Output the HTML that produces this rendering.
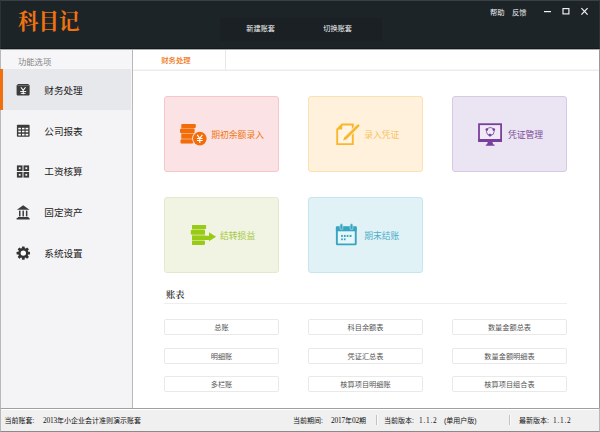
<!DOCTYPE html>
<html lang="zh-CN">
<head>
<meta charset="utf-8">
<title>科目记</title>
<style>
*{box-sizing:border-box;margin:0;padding:0}
html,body{width:600px;height:432px;overflow:hidden;background:#fff}
body{font-family:"Liberation Sans","Noto Sans CJK SC",sans-serif;position:relative;color:#333}
.abs{position:absolute}
svg{position:absolute;overflow:visible}
#hdr{left:0;top:0;width:600px;height:49px;background:#1d2428;border-top:1px solid #3a4044;border-bottom:1px solid #14191c;border-left:1px solid #2c3236;border-right:1px solid #2c3236}
#logo{left:17.8px;top:6.8px;font-size:22px;line-height:30px;color:#f0730f;font-family:"Liberation Serif","Noto Serif CJK SC",serif;font-weight:700;transform-origin:0 0;transform:scaleX(.93);white-space:nowrap}
#tabs{left:220px;top:18px;width:162px;height:22.5px;background:#1a2024}
.ht{top:18.4px;height:22px;line-height:22px;font-size:7.2px;color:#f4f4f4;width:80px;text-align:center}
.tr{top:7.5px;font-size:7.3px;color:#f0f0f0;line-height:10px;white-space:nowrap}
#side{left:0;top:49px;width:133px;height:360px;background:#f4f4f6;border-left:1px solid #b9b9b9;border-right:1px solid #b8b8b8}
#sidehd{left:1px;top:49px;width:131px;height:20px;background:#f6f6f8}
#sidehd span{position:absolute;left:17px;top:6.5px;font-size:8.3px;line-height:12px;color:#858585}
#act{left:0;top:69px;width:131px;height:41px;background:#e7e8ec}
#actbar{left:0;top:69px;width:3.3px;height:41px;background:#f26f0d}
.mi{left:44.3px;font-size:9.6px;line-height:14px;color:#222;height:14px;white-space:nowrap}
#strip{left:133px;top:49px;width:466px;height:22px;border-bottom:1px solid #ececec;background:#fff;box-shadow:inset 0 -1px 0 #f6f6f6}
#tab1{left:133px;top:50px;width:92.5px;height:20px;border-right:1px solid #e8e8e8}
#tab1 span{position:absolute;left:28.2px;top:5.3px;font-weight:500;font-size:7.4px;line-height:12px;color:#f0730f;white-space:nowrap}
.card{width:115px;height:76px;border-radius:3px;border:1px solid}
.card span{position:absolute;font-size:8.8px;line-height:12px;top:32.2px;white-space:nowrap}
.sec{left:166px;top:288px;font-size:9.3px;line-height:14px;color:#2a2a2a;font-weight:600;font-family:"Liberation Serif","Noto Serif CJK SC",serif}
#secline{left:164px;top:303px;width:403px;height:1px;background:#eee}
.btn{width:115px;height:16px;border:1px solid #e9e9e9;border-radius:2px;font-size:7.2px;line-height:15px;text-align:center;color:#555;background:#fff;white-space:nowrap}
#status{left:0;top:408px;width:600px;height:24px;background:#f0f0f0;border-top:1px solid #a0a0a0;border-bottom:1px solid #8a8a8a;border-left:1px solid #b9b9b9;border-right:1px solid #b9b9b9;box-shadow:inset 0 1px 0 #fff}
.st{top:415px;font-size:7px;line-height:12px;color:#111;white-space:nowrap}
.st b{font-weight:400;font-family:"Liberation Serif",serif;font-size:7.4px;letter-spacing:-.2px}
.st i{font-style:normal;display:inline-block;width:3.5px;text-align:center}
.sep{top:415px;width:2px;height:10px;background:linear-gradient(90deg,#c2c2c2 50%,#fbfbfb 50%)}
</style>
</head>
<body>
<div id="hdr" class="abs"></div>
<div id="logo" class="abs">科目记</div>
<div id="tabs" class="abs"></div>
<div class="abs ht" style="left:220.7px">新建账套</div>
<div class="abs ht" style="left:297.7px">切换账套</div>
<div class="abs tr" style="left:490px">帮助</div>
<div class="abs tr" style="left:512px">反馈</div>
<svg style="left:540px;top:4px" width="56" height="16" viewBox="0 0 56 16">
<rect x="4" y="7" width="7" height="1.2" fill="#f4f4f4"/>
<rect x="23" y="4.6" width="5.9" height="5.3" fill="none" stroke="#f4f4f4" stroke-width="1.15"/>
<path d="M41.4 4.2 L47.6 10.6 M47.6 4.2 L41.4 10.6" stroke="#f4f4f4" stroke-width="1.2" fill="none"/>
</svg>

<div id="side" class="abs"></div>
<div id="sidehd" class="abs"><span>功能选项</span></div>
<div id="act" class="abs"></div>
<div id="actbar" class="abs"></div>
<div class="abs mi" style="top:83.8px">财务处理</div>
<div class="abs mi" style="top:124.7px">公司报表</div>
<div class="abs mi" style="top:165px">工资核算</div>
<div class="abs mi" style="top:205.9px">固定资产</div>
<div class="abs mi" style="top:246.8px">系统设置</div>

<!-- sidebar icons -->
<svg style="left:16px;top:83px" width="14" height="13" viewBox="0 0 14 13">
<path d="M2 .9 H12.2 L13.6 2.6 V11.6 Q13.6 12.4 12.8 12.4 H1.4 Q.6 12.4 .6 11.6 V2.6 Z" fill="#3b3b3b"/>
<rect x="1.2" y="2.3" width="11.8" height=".6" fill="#8a8a8a"/>
<path d="M4.9 4.2 L7.2 7.4 L9.5 4.2 M7.2 7.4 V11.3" stroke="#fff" stroke-width="1.05" fill="none"/><path d="M4.2 8.5 H10.2 M4.8 10.4 H9.6" stroke="#fff" stroke-width=".9" fill="none"/>
</svg>
<svg style="left:16px;top:124px" width="14" height="13" viewBox="0 0 14 13">
<rect x=".9" y=".8" width="12.7" height="11.9" rx=".8" fill="#3b3b3b"/>
<g fill="#fff">
<rect x="2.3" y="3.8" width="2.6" height="1.6"/><rect x="6" y="3.8" width="2.5" height="1.6"/><rect x="9.6" y="3.8" width="2.6" height="1.6"/>
<rect x="2.3" y="6.7" width="2.6" height="1.6"/><rect x="6" y="6.7" width="2.5" height="1.6"/><rect x="9.6" y="6.7" width="2.6" height="1.6"/>
<rect x="2.3" y="9.8" width="2.6" height="1.7"/><rect x="6" y="9.8" width="2.5" height="1.7"/><rect x="9.6" y="9.8" width="2.6" height="1.7"/>
</g>
</svg>
<svg style="left:16px;top:165px" width="14" height="13" viewBox="0 0 14 13">
<g fill="none" stroke="#3b3b3b" stroke-width="1.9">
<rect x="1.85" y="1.35" width="3.7" height="3.7"/><rect x="8.45" y="1.35" width="3.7" height="3.7"/>
<rect x="1.85" y="7.95" width="3.7" height="3.7"/><rect x="8.45" y="7.95" width="3.7" height="3.7"/>
</g>
</svg>
<svg style="left:16px;top:205px" width="14" height="15" viewBox="0 0 14 15">
<path d="M7.2 .3 L13.5 4.8 H.9 Z" fill="#3b3b3b"/>
<rect x="3" y="5.6" width="1.5" height="5.8" fill="#3b3b3b"/><rect x="6.45" y="5.6" width="1.5" height="5.8" fill="#3b3b3b"/><rect x="9.9" y="5.6" width="1.5" height="5.8" fill="#3b3b3b"/>
<path d="M1.8 12 H12.6 V12.9 H13.6 V14.6 H.6 V12.9 H1.8 Z" fill="#3b3b3b"/>
</svg>
<svg style="left:16px;top:246px" width="14" height="14" viewBox="-7 -7 14 14">
<g transform="translate(.3 .1)">
<g fill="#333">
<rect x="-1.4" y="-6.7" width="2.8" height="13.4" rx=".5"/>
<rect x="-1.4" y="-6.7" width="2.8" height="13.4" rx=".5" transform="rotate(45)"/>
<rect x="-1.4" y="-6.7" width="2.8" height="13.4" rx=".5" transform="rotate(90)"/>
<rect x="-1.4" y="-6.7" width="2.8" height="13.4" rx=".5" transform="rotate(135)"/>
<circle r="5"/>
</g>
<circle r="2.7" fill="#fff"/>
</g>
</svg>

<div id="strip" class="abs"></div>
<div class="abs" style="left:1px;top:49px;width:598px;height:1px;background:#a9acad"></div>
<div class="abs" style="left:599px;top:49px;width:1px;height:360px;background:#9a9a9a"></div>
<div id="tab1" class="abs"><span>财务处理</span></div>

<div class="abs card" style="left:164px;top:96px;background:#fbe3e5;border-color:#f6c6c9"><span style="left:46.2px;color:#f0730f">期初余额录入</span></div>
<div class="abs card" style="left:308px;top:96px;background:#fff1dc;border-color:#fbe2b4"><span style="left:55.2px;color:#f7c35c">录入凭证</span></div>
<div class="abs card" style="left:452px;top:96px;background:#ebe4f2;border-color:#d6cae3"><span style="left:54.9px;color:#7a4a9a">凭证管理</span></div>
<div class="abs card" style="left:164px;top:197px;background:#f1f4e2;border-color:#e4e9cd"><span style="left:55px;color:#a6c83e">结转损益</span></div>
<div class="abs card" style="left:308px;top:197px;background:#e1f2f7;border-color:#c6e5ee"><span style="left:55.2px;color:#4fb0c9">期末结账</span></div>

<!-- card icons -->
<svg style="left:178px;top:122px" width="32" height="26" viewBox="0 0 32 26">
<rect x="3" y="2.4" width="13.5" height="18.8" fill="#f7a86c"/>
<g fill="#f26d0a">
<rect x="3.5" y="2" width="14.3" height="3.9" rx="1"/>
<rect x="2" y="6.8" width="14.5" height="4.2" rx="1"/>
<rect x="3.5" y="11.9" width="12.5" height="4.6" rx="1"/>
<rect x="2.5" y="17.4" width="12.5" height="4.2" rx="1"/>
</g>
<circle cx="21.8" cy="16.6" r="7.7" fill="#fbe3e5"/>
<circle cx="21.8" cy="16.6" r="6.8" fill="#f26d0a"/>
<path d="M19.2 12.8 L21.8 16.3 L24.4 12.8 M21.8 16.3 V21" stroke="#fff" stroke-width="1.1" fill="none"/><path d="M19 16.5 H24.6 M19 18.5 H24.6" stroke="#fff" stroke-width="1" fill="none"/>
</svg>
<svg style="left:334px;top:122px" width="28" height="26" viewBox="0 0 28 26">
<path d="M8 2.5 H18.8 V22.1 H3.2 V7.3 Z" fill="#fff5e4" stroke="#fab72b" stroke-width="1.9"/>
<path d="M8.2 2.2 V7.5 H2.9 Z" fill="#fab72b"/>
<path d="M24.2 3.6 L11.6 16.2" stroke="#fff1dc" stroke-width="4.2" stroke-linecap="round" fill="none"/>
<path d="M24.2 3.6 L11.8 16" stroke="#fab72b" stroke-width="2.7" stroke-linecap="round" fill="none"/>
<path d="M10.6 14.8 L9 18.6 L12.8 17 Z" fill="#fab72b"/>
</svg>
<svg style="left:476px;top:122px" width="28" height="26" viewBox="0 0 28 26">
<rect x="3" y="2.2" width="22.1" height="16" fill="#efeaf6" stroke="#7a3f9d" stroke-width="1.8"/>
<rect x="2.1" y="17" width="23.9" height="3" fill="#7a3f9d"/>
<path d="M11.8 20 H16.4 L17.2 22.4 H18.5 V23.8 H9.8 V22.4 H11 Z" fill="#7a3f9d"/>
<circle cx="14.3" cy="9.4" r="3.9" fill="none" stroke="#7a3f9d" stroke-width=".8"/>
<circle cx="10.8" cy="7.6" r="1.3" fill="#7a3f9d"/><circle cx="17.8" cy="7.6" r="1.3" fill="#7a3f9d"/><circle cx="14" cy="13.2" r="1.4" fill="#7a3f9d"/>
</svg>
<svg style="left:188px;top:222px" width="30" height="26" viewBox="0 0 30 26">
<rect x="4" y="3.4" width="12.6" height="19" fill="#c8df7c"/>
<g fill="#98cb15">
<rect x="4" y="2.9" width="14.1" height="4.1" rx=".6"/>
<rect x="2.8" y="8.1" width="14.2" height="4.5" rx=".6"/>
<rect x="4" y="13.7" width="14" height="4.4" rx=".6"/>
<rect x="4" y="19" width="13" height="3.9" rx=".6"/>
<path d="M16 13.7 H21 V10.3 L28.1 14.8 L21 19.3 V18.1 H16 Z"/>
</g>
<path d="M16.6 23 L20.6 18.7" stroke="#f1f4e2" stroke-width=".8" fill="none"/>
</svg>
<svg style="left:334px;top:222px" width="26" height="26" viewBox="0 0 26 26">
<rect x="2.85" y="5.35" width="18.9" height="17" rx=".6" fill="#e8f6fa" stroke="#35a5c1" stroke-width="1.9"/>
<rect x="1.9" y="4.4" width="20.8" height="4.9" fill="#35a5c1"/>
<rect x="6" y="1.8" width="2.8" height="5.8" rx="1.2" fill="#35a5c1" stroke="#bfe3ee" stroke-width=".7"/><rect x="16.1" y="1.8" width="2.8" height="5.8" rx="1.2" fill="#35a5c1" stroke="#bfe3ee" stroke-width=".7"/>
<g fill="#35a5c1">
<rect x="7.1" y="12.9" width="1.7" height="2.1"/><rect x="9.9" y="12.9" width="1.7" height="2.1"/><rect x="12.7" y="12.9" width="1.7" height="2.1"/><rect x="15.6" y="12.9" width="1.9" height="2.1"/>
<rect x="7.1" y="16.4" width="1.7" height="1.8"/><rect x="9.9" y="16.4" width="1.7" height="1.8"/>
</g>
</svg>

<div class="abs sec">账表</div>
<div id="secline" class="abs"></div>

<div class="abs btn" style="left:164px;top:319px">总账</div>
<div class="abs btn" style="left:308px;top:319px">科目余额表</div>
<div class="abs btn" style="left:452px;top:319px">数量金额总表</div>
<div class="abs btn" style="left:164px;top:348px">明细账</div>
<div class="abs btn" style="left:308px;top:348px">凭证汇总表</div>
<div class="abs btn" style="left:452px;top:348px">数量金额明细表</div>
<div class="abs btn" style="left:164px;top:376px">多栏账</div>
<div class="abs btn" style="left:308px;top:376px">核算项目明细账</div>
<div class="abs btn" style="left:452px;top:376px">核算项目组合表</div>

<div id="status" class="abs"></div>
<div class="abs st" style="left:4.5px">当前账套:</div>
<div class="abs st" style="left:43px"><b>2013</b>年小企业会计准则演示账套</div>
<div class="abs st" style="left:293px">当前期间:</div>
<div class="abs st" style="left:331px"><b>2017</b>年<b>02</b>期</div>
<div class="abs sep" style="left:376px"></div>
<div class="abs st" style="left:384px">当前版本:</div>
<div class="abs st" style="left:419px"><b>1<i>.</i>1<i>.</i>2</b></div>
<div class="abs st" style="left:444px">(单用户版)</div>
<div class="abs sep" style="left:509px"></div>
<div class="abs st" style="left:519px">最新版本:</div>
<div class="abs st" style="left:553px"><b>1<i>.</i>1<i>.</i>2</b></div>
</body>
</html>
